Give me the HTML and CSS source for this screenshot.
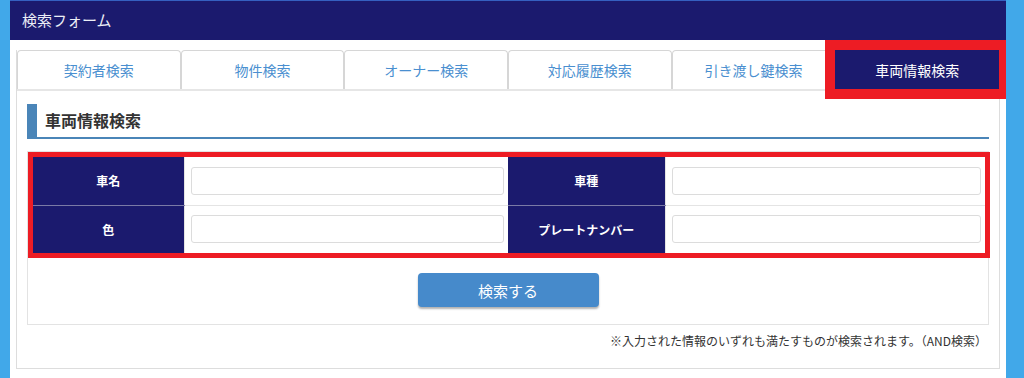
FILE: index.html
```html
<!DOCTYPE html>
<html lang="ja">
<head>
    <meta charset="UTF-8">
    <meta name="viewport" content="width=device-width, initial-scale=1.0">
    <title>検索フォーム</title>
    <link rel="stylesheet" href="styles.css">
</head>
<body>
    <div class="page">
        <!-- Header -->
        <div class="form-header">検索フォーム</div>

        <div class="panel">
            <!-- Tabs -->
            <ul class="tabs">
                <li class="tab">契約者検索</li>
                <li class="tab">物件検索</li>
                <li class="tab">オーナー検索</li>
                <li class="tab">対応履歴検索</li>
                <li class="tab">引き渡し鍵検索</li>
                <li class="tab active">車両情報検索</li>
            </ul>

            <div class="tab-body">
                <h2 class="section-title">車両情報検索</h2>

                <div class="search-box">
                    <div class="highlight">
                        <table class="search-table">
                            <tr>
                                <th>車名</th>
                                <td><input type="text"></td>
                                <th>車種</th>
                                <td><input type="text"></td>
                            </tr>
                            <tr>
                                <th>色</th>
                                <td><input type="text"></td>
                                <th>プレートナンバー</th>
                                <td><input type="text"></td>
                            </tr>
                        </table>
                    </div>
                    <div class="actions">
                        <button class="btn-search">検索する</button>
                    </div>
                </div>

                <p class="note">※入力された情報のいずれも満たすものが検索されます。（AND検索）</p>
            </div>
        </div>
    </div>
</body>
</html>
```

FILE: styles.css
```css
/* Reset */
* {
    margin: 0;
    padding: 0;
    box-sizing: border-box;
}

/* Variables */
:root {
    --navy: #1b1a6e;
    --side-blue: #41a8e9;
    --accent: #4a85b8;
    --link-blue: #4a8fd0;
    --mark-red: #ed1c24;
    --line: #dddddd;
}

html, body {
    height: 100%;
}

body {
    background-color: var(--side-blue);
    font-family: "Noto Sans CJK JP", "Noto Sans", sans-serif;
    color: #333;
}

.page {
    margin: 0 18px 0 10px;
    min-height: 100%;
    background-color: #fff;
    overflow: hidden;
}

/* Header */
.form-header {
    height: 40px;
    line-height: 38px;
    padding-left: 12px;
    background-color: var(--navy);
    border-top: 1px solid #3560c0;
    color: #eceef6;
    font-size: 15px;
}

/* Panel */
.panel {
    margin: 10px 6px 0 6px;
    border: 1px solid var(--line);
    border-top: none;
    padding-bottom: 18px;
}

.tabs {
    display: flex;
    list-style: none;
    border-bottom: 2px solid #e6e6e6;
}

.tab {
    flex: 1;
    height: 39px;
    display: flex;
    justify-content: center;
    align-items: center;
    border: 1px solid #d6d6d6;
    border-bottom: none;
    border-radius: 4px 4px 0 0;
    color: var(--link-blue);
    font-size: 14px;
}

.tab.active {
    background-color: var(--navy);
    border-color: var(--navy);
    border-radius: 0;
    color: #fff;
    outline: 10px solid var(--mark-red);
    position: relative;
}

.tab-body {
    padding: 13px 10px 0 10px;
}

/* Section title */
.section-title {
    height: 35px;
    line-height: 33px;
    padding-left: 8px;
    border-left: 10px solid var(--accent);
    border-bottom: 2px solid var(--accent);
    font-size: 16px;
    font-weight: bold;
    color: #333;
}

/* Search box */
.search-box {
    margin-top: 12px;
    border: 1px solid #e3e3e3;
    padding-bottom: 17px;
}

.highlight {
    border: 5px solid var(--mark-red);
    margin-right: -2px;
}

.search-table {
    width: 100%;
    border-collapse: collapse;
    table-layout: fixed;
}

.search-table th {
    height: 48px;
    background-color: var(--navy);
    color: #fff;
    font-size: 12px;
    font-weight: bold;
    text-align: center;
    border-bottom: 1px solid #7a7aa6;
}

.search-table th:nth-child(1) {
    width: 151px;
}

.search-table td:nth-child(2) {
    width: 324px;
}

.search-table th:nth-child(3) {
    width: 157px;
}

.search-table td {
    padding: 0 4px 0 6px;
    border-bottom: 1px solid #e4e4e4;
    border-left: 1px solid #e4e4e4;
}

.search-table tr:last-child th,
.search-table tr:last-child td {
    border-bottom: none;
}

.search-table input {
    display: block;
    width: 100%;
    height: 28px;
    border: 1px solid #dcdcdc;
    border-radius: 3px;
    background: #fff;
}

.actions {
    display: flex;
    justify-content: center;
    margin-top: 15px;
}

.btn-search {
    width: 181px;
    height: 34px;
    border: none;
    border-radius: 4px;
    background-color: #468acb;
    box-shadow: 0 2px 2px rgba(0, 0, 0, 0.3);
    color: #fff;
    font-family: inherit;
    font-size: 15px;
}

.note {
    margin-top: 7px;
    padding-right: 2px;
    text-align: right;
    font-size: 12px;
    line-height: 18px;
    color: #333;
}
```
